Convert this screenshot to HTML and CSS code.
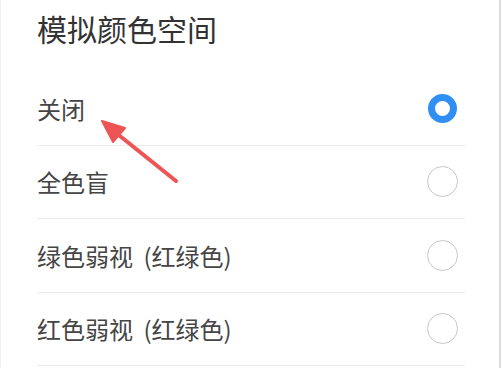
FILE: index.html
```html
<!DOCTYPE html>
<html lang="zh-CN">
<head>
<meta charset="utf-8">
<link rel="stylesheet" href="styles.css">
</head>
<body>
<div class="panel">
  <h1 class="title">模拟颜色空间</h1>
  <ul class="list">
    <li class="row"><span class="label">关闭</span><span class="radio on"></span></li>
    <li class="row"><span class="label">全色盲</span><span class="radio"></span></li>
    <li class="row"><span class="label">绿色弱视 (红绿色)</span><span class="radio"></span></li>
    <li class="row"><span class="label">红色弱视 (红绿色)</span><span class="radio"></span></li>
  </ul>
  <svg class="arrow" width="503" height="368" viewBox="0 0 503 368">
    <line x1="175" y1="181" x2="114" y2="132" stroke="#ec5455" stroke-width="4" stroke-linecap="round"/>
    <polygon points="101,121 124,128 112,142" fill="#ec5455" stroke="#ec5455" stroke-width="2" stroke-linejoin="round"/>
  </svg>
</div>
</body>
</html>
```
FILE: styles.css
```css
html, body {
  margin: 0;
  padding: 0;
  background: #fff;
}
body {
  width: 503px;
  height: 368px;
  overflow: hidden;
  font-family: "Noto Sans CJK SC", "Noto Sans", sans-serif;
}
.panel {
  position: relative;
  box-sizing: border-box;
  width: 501px;
  height: 368px;
  border-left: 1px solid #f2f2f2;
  border-right: 2px solid #dcdcdc;
  padding-left: 36px;
  padding-right: 34px;
}
.title {
  margin: 0;
  height: 72px;
  line-height: 56px;
  font-size: 30px;
  font-weight: normal;
  color: #333;
}
.list {
  list-style: none;
  margin: 0;
  padding: 0;
}
.row {
  box-sizing: border-box;
  height: 73.5px;
  border-bottom: 1px solid #ececec;
  display: flex;
  align-items: center;
  justify-content: space-between;
  padding-right: 7px;
}
.label {
  font-size: 24px;
  word-spacing: 5px;
  color: #454545;
}
.radio {
  box-sizing: border-box;
  width: 31px;
  height: 31px;
  border-radius: 50%;
  border: 1.5px solid #c8c8c8;
}
.radio.on {
  width: 29px;
  height: 29px;
  margin-right: 1px;
  border: 7.5px solid #2f8ff2;
}
.arrow {
  position: absolute;
  left: 0;
  top: 0;
}
```
